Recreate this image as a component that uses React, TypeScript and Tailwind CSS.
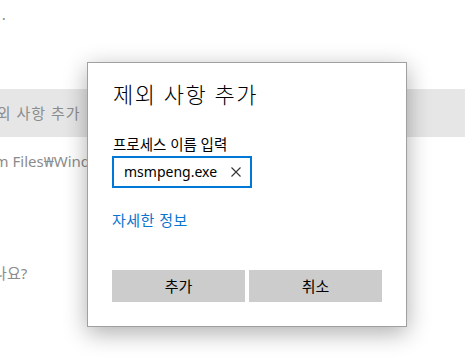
const font = "font-['Noto_Sans','Noto_Sans_CJK_KR',sans-serif]"

function ClearIcon() {
  return (
    <svg width="10" height="10" viewBox="0 0 10 10" fill="none" stroke="#333" strokeWidth="1.1">
      <path d="M0.5 0.5 L9.5 9.5 M9.5 0.5 L0.5 9.5" />
    </svg>
  )
}

function Background() {
  return (
    <div className={`flex h-[361px] w-[465px] flex-col overflow-hidden bg-white text-[15px] text-[#8c8c8c] ${font}`}>
      <div className="h-[6px]" />
      <p className="ml-[-12px] leading-[16px]">ㅤ.</p>
      <div className="mt-[67px] flex h-[48px] items-center bg-[#e6e6e6]">
        <span className="ml-[-18px] whitespace-nowrap tracking-[1px]">제외 사항 추가</span>
      </div>
      <p className="mt-[14px] ml-[-53px] whitespace-nowrap leading-[20px]">Program Files₩Windows Defender</p>
      <p className="mt-[92px] ml-[-66px] whitespace-nowrap leading-[20px]">질문이 있나요?</p>
    </div>
  )
}

export default function App() {
  return (
    <div className="relative h-[361px] w-[465px] overflow-hidden">
      <Background />
      <div
        className={`absolute left-[87px] top-[62px] flex h-[265px] w-[320px] flex-col border border-[#a0a0a0] bg-white px-[24px] shadow-[0_6px_22px_rgba(0,0,0,0.32)] ${font}`}
      >
        <h2 className="mt-[17px] ml-[1px] text-[22px] font-light leading-[29px] tracking-[1.5px] text-black">제외 사항 추가</h2>
        <label className="mt-[25px] ml-[1px] text-[14.5px] leading-[20px] text-black">프로세스 이름 입력</label>
        <div className="mt-[2px] flex h-[32px] w-[140px] items-center justify-between border-2 border-[#0078d7] pl-[10px] pr-[9px]">
          <span className="text-[14px] leading-[20px] text-black">msmpeng.exe</span>
          <ClearIcon />
        </div>
        <a className="mt-[22px] text-[15px] leading-[20px] tracking-[0.5px] text-[#0a74cf]">자세한 정보</a>
        <div className="mt-auto mb-[24px] flex gap-[4px]">
          <button type="button" className="h-[32px] flex-1 bg-[#cccccc] text-[15px] text-black">
            추가
          </button>
          <button type="button" className="h-[32px] flex-1 bg-[#cccccc] text-[15px] text-black">
            취소
          </button>
        </div>
      </div>
    </div>
  )
}
